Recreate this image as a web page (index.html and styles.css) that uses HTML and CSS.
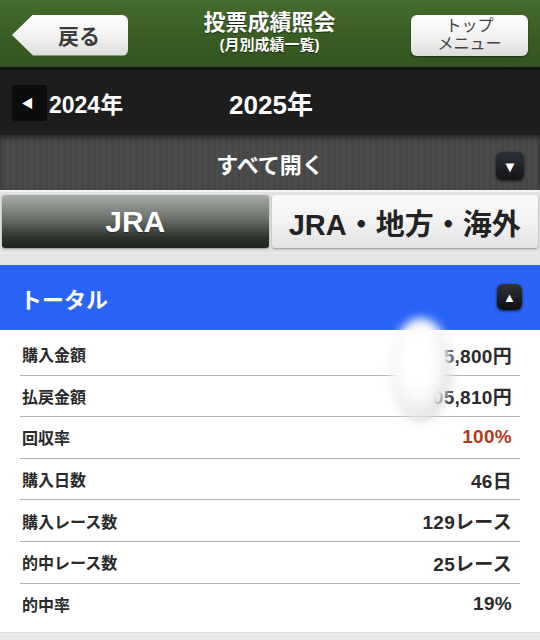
FILE: index.html
```html
<!DOCTYPE html>
<html lang="ja">
<head>
    <meta charset="UTF-8">
    <meta name="viewport" content="width=device-width, initial-scale=1.0">
    <title>投票成績照会</title>
    <link rel="stylesheet" href="styles.css">
</head>
<body>
    <div class="page">

        <header class="topbar">
            <a class="back-btn" href="#">戻る</a>
            <div class="title">
                <h1>投票成績照会</h1>
                <p>(月別成績一覧)</p>
            </div>
            <a class="menu-btn" href="#">トップ<br>メニュー</a>
        </header>

        <div class="yearbar">
            <div class="prev-year">
                <span class="prev-btn">&#9664;</span>
                <span>2024年</span>
            </div>
            <div class="this-year">2025年</div>
            <div></div>
        </div>

        <div class="openall">
            <span>すべて開く</span>
            <span class="toggle">&#9660;</span>
        </div>

        <div class="tabs">
            <div class="tab active">JRA</div>
            <div class="tab">JRA・地方・海外</div>
        </div>

        <div class="section">
            <span>トータル</span>
            <span class="toggle small">&#9650;</span>
        </div>

        <ul class="results">
            <li><span>購入金額</span><span>5,800円</span></li>
            <li><span>払戻金額</span><span>05,810円</span></li>
            <li><span>回収率</span><span class="red">100%</span></li>
            <li><span>購入日数</span><span>46日</span></li>
            <li><span>購入レース数</span><span>129レース</span></li>
            <li><span>的中レース数</span><span>25レース</span></li>
            <li><span>的中率</span><span>19%</span></li>
        </ul>

        <div class="smudge"></div>
    </div>
</body>
</html>
```

FILE: styles.css
```css
* {
    box-sizing: border-box;
}
body {
    margin: 0;
    font-family: "Liberation Sans", "Noto Sans CJK JP", sans-serif;
    font-weight: bold;
    background-color: #e8e8e6;
}
.page {
    position: relative;
    width: 540px;
    height: 640px;
    overflow: hidden;
}

/* header */
.topbar {
    height: 70px;
    display: flex;
    align-items: center;
    justify-content: space-between;
    padding: 0 12px;
    background: linear-gradient(#466b2d, #3a5c24 60%, #34531f);
    border-bottom: 3px solid #101410;
}
.back-btn {
    width: 116px;
    height: 41px;
    margin-top: 3px;
    display: flex;
    align-items: center;
    justify-content: center;
    padding-left: 18px;
    font-size: 21px;
    color: #3c3c3c;
    text-decoration: none;
    background: linear-gradient(#ffffff, #f1f1f1 55%, #dcdcdc);
    border-radius: 0 6px 6px 0;
    clip-path: polygon(0 50%, 21px 0, 100% 0, 100% 100%, 21px 100%);
}
.title {
    text-align: center;
    color: #fff;
    text-shadow: 0 1px 1px rgba(0, 0, 0, 0.6);
    margin-top: -4px;
}
.title h1 {
    margin: 0;
    font-size: 22px;
    line-height: 26px;
}
.title p {
    margin: 0;
    font-size: 15px;
    line-height: 18px;
}
.menu-btn {
    width: 117px;
    height: 41px;
    margin-top: 3px;
    display: flex;
    align-items: center;
    justify-content: center;
    text-align: center;
    font-size: 16px;
    font-weight: normal;
    line-height: 18px;
    color: #444;
    text-decoration: none;
    background: linear-gradient(#ffffff, #f1f1f1 55%, #dcdcdc);
    border-radius: 6px;
    box-shadow: 0 1px 2px rgba(0, 0, 0, 0.5);
}

/* year selector */
.yearbar {
    height: 65px;
    display: grid;
    grid-template-columns: 1fr auto 1fr;
    align-items: center;
    padding: 0 12px;
    background-color: #1d1d1d;
    color: #fff;
}
.prev-year {
    display: flex;
    align-items: center;
    gap: 2px;
    font-size: 23px;
}
.prev-btn {
    width: 35px;
    height: 36px;
    display: flex;
    align-items: center;
    justify-content: center;
    font-size: 12px;
    padding-right: 4px;
    background-color: #0c0c0c;
    border-radius: 3px;
}
.this-year {
    font-size: 26px;
    margin-left: 2px;
}

/* open all */
.openall {
    position: relative;
    height: 57px;
    display: flex;
    align-items: center;
    justify-content: center;
    color: #fff;
    font-size: 22px;
    background: repeating-linear-gradient(90deg, #4b4b4b 0, #4b4b4b 3px, #474747 3px, #474747 6px);
    box-shadow: inset 0 3px 4px rgba(0, 0, 0, 0.45);
    border-bottom: 2px solid #f4f4f4;
}
.toggle {
    position: absolute;
    right: 16px;
    top: 17px;
    width: 28px;
    height: 28px;
    display: flex;
    align-items: center;
    justify-content: center;
    font-size: 15px;
    color: #fff;
    background: linear-gradient(#2e3038, #15161a);
    border-radius: 6px;
    box-shadow: 0 1px 3px rgba(0, 0, 0, 0.7);
}
.toggle.small {
    right: 18px;
    top: 19px;
    width: 25px;
    height: 26px;
    font-size: 13px;
    background: linear-gradient(#30323a, #0e0f12);
}

/* tabs */
.tabs {
    display: flex;
    gap: 3px;
    padding: 3px 2px 0;
    height: 73px;
    background: linear-gradient(#e2e2e0 0, #e2e2e0 60px, #f0f0ee 61px, #e4e4e2 62px);
}
.tab {
    flex: 1;
    height: 53px;
    display: flex;
    align-items: center;
    justify-content: center;
    font-size: 29px;
    color: #222;
    border-radius: 3px;
    background: linear-gradient(#fafafa, #f2f2f2 50%, #e2e2e2);
    box-shadow: 0 1px 2px rgba(0, 0, 0, 0.35);
}
.tab.active {
    font-size: 30px;
    color: #fff;
    background: linear-gradient(#a8aca8, #6c716c 45%, #2d322d 80%, #1e231e);
    text-shadow: 0 1px 1px rgba(0, 0, 0, 0.4);
}

/* section header */
.section {
    position: relative;
    height: 65px;
    display: flex;
    align-items: center;
    padding-left: 20px;
    font-size: 22px;
    color: #fff;
    background-color: #2a64f6;
}

/* results list */
.results {
    list-style: none;
    margin: 0;
    padding: 4px 20px 7px;
    background-color: #fff;
    color: #2a2a2a;
    border-bottom: 1px solid #dcdcdc;
}
.results li {
    height: 41.6px;
    display: flex;
    align-items: center;
    justify-content: space-between;
    padding: 0 8px 0 2px;
    font-size: 16px;
    border-bottom: 1px solid #b4b4b4;
}
.results li:last-child {
    border-bottom: none;
}
.results li span:last-child {
    font-size: 19px;
    letter-spacing: 0.3px;
}
.red {
    color: #b8381a;
}

/* privacy blur over the amounts */
.smudge {
    position: absolute;
    left: 390px;
    top: 318px;
    width: 62px;
    height: 104px;
    border-radius: 50%;
    background: radial-gradient(ellipse at 45% 40%, #ffffff 30%, #f2f2f4 55%, rgba(200, 200, 205, 0.7) 75%, rgba(255, 255, 255, 0) 100%);
    filter: blur(5px);
}
```
